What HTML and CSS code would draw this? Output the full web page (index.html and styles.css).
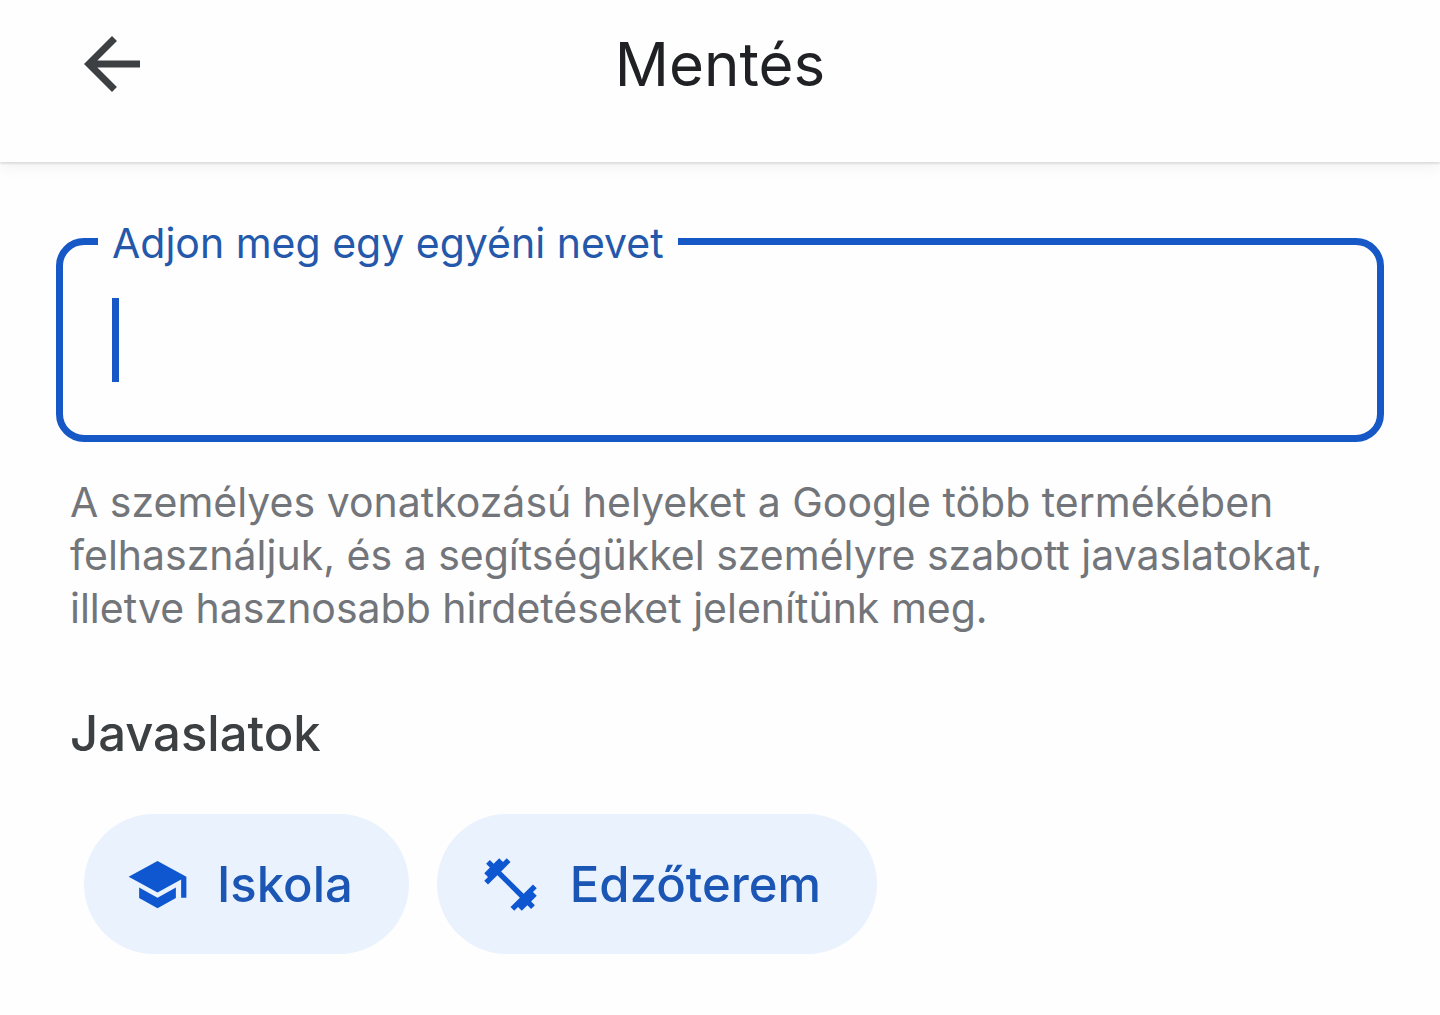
FILE: index.html
```html
<!DOCTYPE html>
<html lang="hu">
<head>
<meta charset="utf-8">
<meta name="viewport" content="width=device-width, initial-scale=1">
<title>Mentés</title>
<link rel="stylesheet" href="styles.css">
</head>
<body>
<header class="app-bar">
  <button class="back" type="button" aria-label="Vissza">
    <svg class="back-icon" viewBox="0 0 24 24" aria-hidden="true"><path d="M20 11H7.83l5.59-5.59L12 4l-8 8 8 8 1.41-1.41L7.83 13H20v-2z"/></svg>
  </button>
  <h1 class="title">Mentés</h1>
</header>
<main class="content">
  <fieldset class="field">
    <legend class="field-legend"><label for="name">Adjon meg egy egyéni nevet</label></legend>
    <div class="field-row">
      <input class="field-input" id="name" type="text" aria-describedby="help">
    </div>
  </fieldset>
  <p class="help" id="help">A személyes vonatkozású helyeket a Google több termékében felhasználjuk, és a segítségükkel személyre szabott javaslatokat, illetve hasznosabb hirdetéseket jelenítünk meg.</p>
  <h2 class="section-title">Javaslatok</h2>
  <div class="chips">
    <button class="chip" type="button">
      <svg class="chip-icon" viewBox="0 0 24 24" aria-hidden="true"><path d="M5 13.18v4L12 21l7-3.82v-4L12 17l-7-3.82zM12 3L1 9l11 6 9-4.91V17h2V9L12 3z"/></svg>
      Iskola
    </button>
    <button class="chip" type="button">
      <svg class="chip-icon" viewBox="0 0 24 24" aria-hidden="true"><path d="M20.57 14.86L22 13.43 20.57 12 17 15.57 8.43 7 12 3.43 10.57 2 9.14 3.43 7.71 2 5.57 4.14 4.14 2.71 2.71 4.14l1.43 1.43L2 7.71l1.43 1.43L2 10.57 3.43 12 7 8.43 15.57 17 12 20.57 13.43 22l1.43-1.43L16.29 22l2.14-2.14 1.43 1.43 1.43-1.43-1.43-1.43L22 16.29z"/></svg>
      Edzőterem
    </button>
  </div>
</main>
</body>
</html>
```
FILE: styles.css
```css
:root {
  --blue: #1558c6;
}

* {
  box-sizing: border-box;
}

body {
  margin: 0;
  background: #fefefe;
  color: #202124;
  font-family: Inter, "Liberation Sans", sans-serif;
}

button,
input {
  border: 0;
  padding: 0;
  background: none;
  font: inherit;
}

.app-bar {
  display: grid;
  grid-template-columns: 84px 1fr 84px;
  align-items: center;
  padding: 22px 70px 56px;
  background: #fefefe;
  box-shadow: 0 2px 2px rgba(0, 0, 0, 0.1), 0 4px 16px rgba(0, 0, 0, 0.06);
}

.back {
  display: flex;
}

.back-icon {
  width: 84px;
  height: 84px;
  fill: #3c4043;
}

.title {
  margin: 0;
  font-size: 60px;
  line-height: 84px;
  font-weight: 400;
  text-align: center;
}

.content {
  padding: 53px 56px;
}

.field {
  min-width: 0;
  margin: 0;
  padding: 0 49px 53px;
  border: 7px solid var(--blue);
  border-radius: 28px;
}

.field-legend {
  margin-left: -14px;
  padding: 4px 14px 0;
  color: #2458ab;
  font-size: 41px;
  line-height: 49px;
}

.field-row {
  display: flex;
  padding-top: 30px;
}

.field-row::before {
  content: "";
  width: 7px;
  background: var(--blue);
}

.field-input {
  flex: 1;
  min-width: 0;
  height: 84px;
  outline: 0;
  font-size: 60px;
  caret-color: var(--blue);
}

.help {
  margin: 34px 14px 0;
  color: #72757a;
  font-size: 41px;
  line-height: 53px;
}

.section-title {
  margin: 67px 14px 48px;
  color: #3c4043;
  font-size: 49px;
  line-height: 64px;
  font-weight: 500;
}

.chips {
  display: flex;
  flex-wrap: wrap;
  gap: 28px;
  padding: 0 28px;
}

.chip {
  display: flex;
  align-items: center;
  gap: 28px;
  height: 140px;
  padding: 0 56px 0 42px;
  border-radius: 70px;
  background: #eaf2fe;
  color: #1b56b5;
  font-size: 49px;
  font-weight: 500;
}

.chip-icon {
  width: 63px;
  height: 63px;
  fill: #0f57d0;
}
```
